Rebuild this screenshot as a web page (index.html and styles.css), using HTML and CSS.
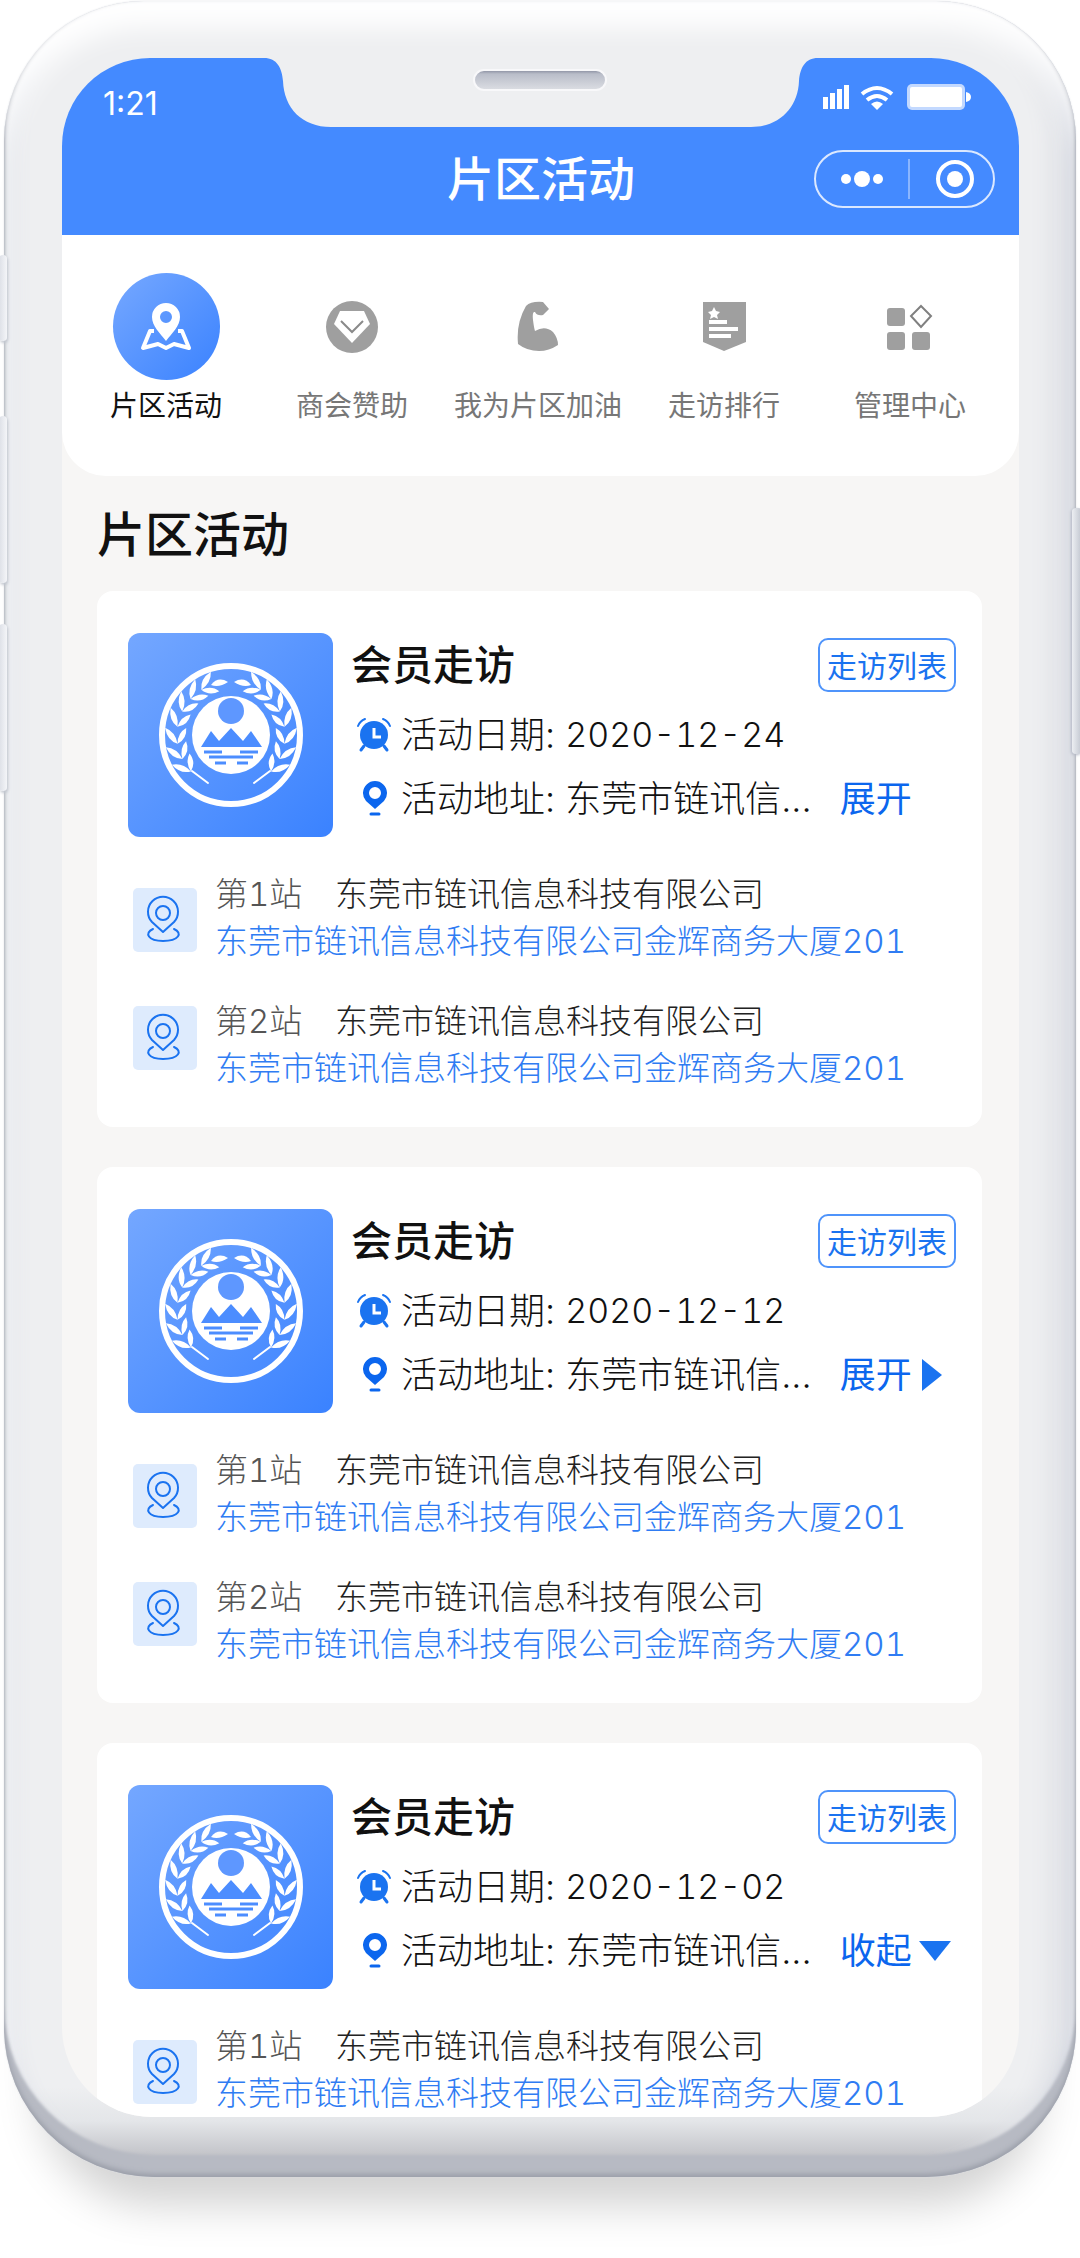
FILE: index.html
```html
<!DOCTYPE html>
<html lang="zh-CN">
<head>
    <meta charset="UTF-8">
    <meta name="viewport" content="width=device-width, initial-scale=1.0">
    <title>片区活动</title>
    <link rel="stylesheet" href="styles.css">
</head>
<body>
    <!-- shared icons -->
    <svg class="sprite" aria-hidden="true">
        <defs>
            <path id="leaf" d="M49 106 Q39 102 38 89 Q48 94 49 106 Q50 95 59 91 Q59 102 49 106Z"/>
            <g id="branch">
                <use href="#leaf" transform="rotate(-38 103 102)"/>
                <use href="#leaf" transform="rotate(-22 103 102)"/>
                <use href="#leaf" transform="rotate(-5 103 102)"/>
                <use href="#leaf" transform="rotate(13 103 102)"/>
                <use href="#leaf" transform="rotate(30 103 102)"/>
                <use href="#leaf" transform="rotate(46 103 102)"/>
                <use href="#leaf" transform="rotate(61 103 102)"/>
                <path d="M83 52 Q90 43 100 49 Q91 55 83 52Z"/>
                <path d="M64 138 L80 150" stroke="#fff" stroke-width="2" stroke-linecap="round"/>
            </g>
        </defs>
        <symbol id="emblem" viewBox="0 0 205 204">
            <circle cx="103" cy="102" r="69" fill="none" stroke="#fff" stroke-width="6"/>
            <circle cx="103" cy="102" r="39" fill="#fff"/>
            <g fill="#fff">
                <use href="#branch"/>
                <use href="#branch" transform="translate(206 0) scale(-1 1)"/>
            </g>
            <circle cx="103" cy="78" r="13" fill="#5e97ff"/>
            <path d="M73 114 L83 98 L91 108 L103 95 L115 108 L123 98 L134 114Z" fill="#4c8dff"/>
            <path d="M76 119h18M112 119h18M81 124h44M87 130h11M109 130h11" stroke="#4c8dff" stroke-width="3"/>
        </symbol>
        <symbol id="clock" viewBox="0 0 34 34">
            <circle cx="17" cy="17" r="14" fill="#1a73f0"/>
            <path d="M7 28l-3 4M27 28l3 4" stroke="#1a73f0" stroke-width="3" stroke-linecap="round"/>
            <path d="M1 8Q3 3 8 1M26 1Q31 3 33 8" fill="none" stroke="#1a73f0" stroke-width="2" stroke-linecap="round"/>
            <path d="M17 10v9h7" fill="none" stroke="#fff" stroke-width="3"/>
        </symbol>
        <symbol id="pin" viewBox="0 0 34 36">
            <path fill-rule="evenodd" d="M18 28L9 20A12 12 0 1 1 27 20ZM18 6a6 6 0 1 0 0 12a6 6 0 1 0 0-12Z" fill="#0b66ee"/>
            <path d="M14 33h8" stroke="#0b66ee" stroke-width="3" stroke-linecap="round"/>
        </symbol>
        <symbol id="place" viewBox="0 0 64 64">
            <g fill="none" stroke="#1a73f0" stroke-width="2">
                <path d="M30 44L19 34A15 15 0 1 1 41 34Z" stroke-linejoin="round"/>
                <circle cx="30" cy="25" r="7"/>
                <path d="M20 41C11 45 15 53 30 53C46 53 50 45 41 41" stroke-linecap="round"/>
            </g>
        </symbol>
    </svg>

    <div class="phone">
        <span class="key key-mute"></span>
        <span class="key key-up"></span>
        <span class="key key-down"></span>
        <span class="key key-power"></span>

        <div class="screen">
            <svg class="notch" width="554" height="69" viewBox="0 0 554 69" aria-hidden="true">
                <defs>
                    <linearGradient id="speaker" x1="0" y1="0" x2="0" y2="1">
                        <stop offset="0" stop-color="#858a9c"/>
                        <stop offset="0.2" stop-color="#b9bdc9"/>
                        <stop offset="1" stop-color="#dcdee3"/>
                    </linearGradient>
                </defs>
                <path d="M0 0C13 0 18 10 19 23C20 50 38 69 67 69H487C516 69 534 49 535 23C536 10 541 0 554 0Z" fill="#eeeff1"/>
                <rect x="210" y="12" width="132" height="20" rx="10" fill="url(#speaker)" stroke="#f8f8fa" stroke-width="2"/>
            </svg>

            <header class="header">
                <div class="status">
                    <span class="time">1:21</span>
                    <svg class="signals" width="149" height="28" viewBox="0 0 149 28" aria-hidden="true">
                        <g fill="#fff">
                            <path d="M0 14h5v12H0zM7 10h5v16H7zM14 6h5v20h-5zM21 2h5v24h-5z"/>
                            <path d="M54 27l-6-6q6-5 12 0z"/>
                            <path d="M143 9q5 1 5 5t-5 5z"/>
                            <rect x="84" y="1" width="58" height="26" rx="5" fill="#c3d9ff"/>
                            <rect x="87" y="4" width="52" height="20" rx="2"/>
                        </g>
                        <path d="M39 11q15-12 30 0M44 17q10-8 20 0" fill="none" stroke="#fff" stroke-width="4"/>
                    </svg>
                </div>
                <div class="titlebar">
                    <h1>片区活动</h1>
                    <div class="capsule">
                        <button type="button" aria-label="更多">
                            <svg width="42" height="16" viewBox="0 0 42 16"><g fill="#fff"><circle cx="5" cy="8" r="5"/><circle cx="21" cy="8" r="8"/><circle cx="37" cy="8" r="5"/></g></svg>
                        </button>
                        <button type="button" aria-label="关闭">
                            <svg width="40" height="40" viewBox="0 0 40 40"><circle cx="20" cy="20" r="17" fill="none" stroke="#fff" stroke-width="4"/><circle cx="20" cy="20" r="8" fill="#fff"/></svg>
                        </button>
                    </div>
                </div>
            </header>

            <nav class="nav">
                <a href="#" class="nav-item active">
                    <span class="nav-icon">
                        <svg width="52" height="50" viewBox="0 0 52 50">
                            <path d="M14 29H10L3 46L18 42L26 46L34 42L49 46L42 29H38" fill="none" stroke="#fff" stroke-width="4" stroke-linejoin="round"/>
                            <path fill-rule="evenodd" d="M26 39C20 31 12 24 12 15A14 14 0 0 1 40 15C40 24 32 31 26 39ZM26 9a6 6 0 1 0 0 12a6 6 0 1 0 0-12Z" fill="#fff"/>
                        </svg>
                    </span>
                    片区活动
                </a>
                <a href="#" class="nav-item">
                    <span class="nav-icon">
                        <svg width="52" height="52" viewBox="0 0 52 52">
                            <circle cx="26" cy="26" r="26" fill="#9f9f9f"/>
                            <path d="M14 10H38L44 23L26 42L8 23Z" fill="#fff"/>
                            <path d="M15 20L26 31L37 20" fill="none" stroke="#8a8a8a" stroke-width="2"/>
                        </svg>
                    </span>
                    商会赞助
                </a>
                <a href="#" class="nav-item">
                    <span class="nav-icon">
                        <svg width="42" height="51" viewBox="0 0 42 51">
                            <path d="M9 5Q14 0 26 1L32 8L26 14Q20 15 18 11Q15 10 16 19Q17 27 18 30Q28 24 36 31Q41 37 41 44Q32 50 22 50Q10 50 1 43Q-1 22 9 5Z" fill="#9f9f9f"/>
                        </svg>
                    </span>
                    我为片区加油
                </a>
                <a href="#" class="nav-item">
                    <span class="nav-icon">
                        <svg width="43" height="49" viewBox="0 0 43 49">
                            <path d="M0 0H43V40L21 49L0 40Z" fill="#9f9f9f"/>
                            <path d="M11 5L13 9L17 10L14 13L15 17L11 15L7 17L8 13L5 10L9 9Z" fill="#fff"/>
                            <path d="M6 20h18M6 27h29M6 34h22" stroke="#fff" stroke-width="4"/>
                        </svg>
                    </span>
                    走访排行
                </a>
                <a href="#" class="nav-item">
                    <span class="nav-icon">
                        <svg width="46" height="46" viewBox="0 0 46 46">
                            <g fill="#9f9f9f"><rect y="4" width="18" height="18" rx="3"/><rect y="28" width="18" height="18" rx="3"/><rect x="25" y="28" width="18" height="18" rx="3"/></g>
                            <path d="M34 2L44 12L34 23L24 12Z" fill="none" stroke="#808080" stroke-width="2"/>
                        </svg>
                    </span>
                    管理中心
                </a>
            </nav>

            <main class="content">
                <h2>片区活动</h2>

                <article class="card">
                    <div class="card-head">
                        <div class="logo"><svg><use href="#emblem"/></svg></div>
                        <div class="info">
                            <div class="card-title">
                                <h3>会员走访</h3>
                                <button type="button" class="list-btn">走访列表</button>
                            </div>
                            <p class="row"><svg><use href="#clock"/></svg><span>活动日期:</span><time>2020-12-24</time></p>
                            <p class="row"><svg><use href="#pin"/></svg><span>活动地址:</span><span>东莞市链讯信...</span><button type="button" class="toggle">展开</button></p>
                        </div>
                    </div>
                    <ul class="stops">
                        <li class="stop">
                            <svg class="stop-icon"><use href="#place"/></svg>
                            <div>
                                <p class="company"><span class="no">第1站</span>东莞市链讯信息科技有限公司</p>
                                <a href="#" class="address">东莞市链讯信息科技有限公司金辉商务大厦201</a>
                            </div>
                        </li>
                        <li class="stop">
                            <svg class="stop-icon"><use href="#place"/></svg>
                            <div>
                                <p class="company"><span class="no">第2站</span>东莞市链讯信息科技有限公司</p>
                                <a href="#" class="address">东莞市链讯信息科技有限公司金辉商务大厦201</a>
                            </div>
                        </li>
                    </ul>
                </article>

                <article class="card">
                    <div class="card-head">
                        <div class="logo"><svg><use href="#emblem"/></svg></div>
                        <div class="info">
                            <div class="card-title">
                                <h3>会员走访</h3>
                                <button type="button" class="list-btn">走访列表</button>
                            </div>
                            <p class="row"><svg><use href="#clock"/></svg><span>活动日期:</span><time>2020-12-12</time></p>
                            <p class="row"><svg><use href="#pin"/></svg><span>活动地址:</span><span>东莞市链讯信...</span><button type="button" class="toggle closed">展开</button></p>
                        </div>
                    </div>
                    <ul class="stops">
                        <li class="stop">
                            <svg class="stop-icon"><use href="#place"/></svg>
                            <div>
                                <p class="company"><span class="no">第1站</span>东莞市链讯信息科技有限公司</p>
                                <a href="#" class="address">东莞市链讯信息科技有限公司金辉商务大厦201</a>
                            </div>
                        </li>
                        <li class="stop">
                            <svg class="stop-icon"><use href="#place"/></svg>
                            <div>
                                <p class="company"><span class="no">第2站</span>东莞市链讯信息科技有限公司</p>
                                <a href="#" class="address">东莞市链讯信息科技有限公司金辉商务大厦201</a>
                            </div>
                        </li>
                    </ul>
                </article>

                <article class="card last">
                    <div class="card-head">
                        <div class="logo"><svg><use href="#emblem"/></svg></div>
                        <div class="info">
                            <div class="card-title">
                                <h3>会员走访</h3>
                                <button type="button" class="list-btn">走访列表</button>
                            </div>
                            <p class="row"><svg><use href="#clock"/></svg><span>活动日期:</span><time>2020-12-02</time></p>
                            <p class="row"><svg><use href="#pin"/></svg><span>活动地址:</span><span>东莞市链讯信...</span><button type="button" class="toggle open">收起</button></p>
                        </div>
                    </div>
                    <ul class="stops">
                        <li class="stop">
                            <svg class="stop-icon"><use href="#place"/></svg>
                            <div>
                                <p class="company"><span class="no">第1站</span>东莞市链讯信息科技有限公司</p>
                                <a href="#" class="address">东莞市链讯信息科技有限公司金辉商务大厦201</a>
                            </div>
                        </li>
                    </ul>
                </article>
            </main>
        </div>
    </div>
</body>
</html>
```

FILE: styles.css
```css
* {
    box-sizing: border-box;
}

body {
    margin: 0;
    padding: 1px 4px 82px;
    background: #fff;
    color: #111;
    font-family: Inter, "Noto Sans CJK SC", sans-serif;
    overflow-x: hidden;
}

h1, h2, h3, p, ul {
    margin: 0;
    padding: 0;
}

ul {
    list-style: none;
}

a {
    text-decoration: none;
}

button {
    padding: 0;
    border: none;
    background: none;
    font-family: inherit;
}

.sprite {
    position: absolute;
    width: 0;
    height: 0;
}

/* phone body */
.phone {
    position: relative;
    padding: 57px 57px 60px 58px;
    border-radius: 140px 140px 150px 150px;
    background: linear-gradient(#eeeff1 calc(100% - 90px), #e4e6e9 calc(100% - 56px), #c3c4c9 calc(100% - 22px));
    box-shadow:
        inset 0 -3px 5px #9b9fa9,
        inset 0 -22px 3px #b7bac3,
        inset 0 26px 26px #fff,
        inset -10px 0 10px #c9cdd8,
        inset -26px 0 20px #e0e2e7,
        inset 10px 0 18px #dfe2e9,
        0 0 2px #dfe1e5,
        0 64px 44px -36px rgba(0, 0, 0, 0.18);
}

.key {
    position: absolute;
    left: -5px;
    width: 8px;
    border-radius: 4px;
    background: linear-gradient(90deg, #dcdfe6, #f4f5f8);
    box-shadow: 1px 2px 3px #c3c7d0;
}

.key-mute {
    top: 254px;
    height: 86px;
}

.key-up {
    top: 415px;
    height: 167px;
}

.key-down {
    top: 623px;
    height: 167px;
}

.key-power {
    left: auto;
    right: -6px;
    top: 507px;
    height: 246px;
    width: 10px;
    background: linear-gradient(90deg, #eceef2, #bfc4ce);
    box-shadow: -1px 1px 3px #b4b9c6;
}

.screen {
    position: relative;
    overflow: hidden;
    border-radius: 88px 88px 90px 90px;
    background: #f7f6f5;
}

.notch {
    position: absolute;
    top: 0;
    left: 50%;
    transform: translateX(-50%);
}

/* header */
.header {
    padding: 22px 24px 27px 25px;
    background: #448aff;
    color: #fff;
}

.status {
    display: flex;
    justify-content: space-between;
    align-items: center;
    height: 46px;
    padding: 0 23px 0 16px;
    margin-bottom: 23px;
}

.time {
    font-size: 32px;
}

.signals {
    margin-bottom: 12px;
}

.titlebar {
    display: grid;
    grid-template-columns: 1fr auto 1fr;
    align-items: center;
}

h1 {
    grid-column: 2;
    font-size: 47px;
    line-height: 59px;
    font-weight: 500;
}

.capsule {
    justify-self: end;
    display: flex;
    align-items: center;
    width: 181px;
    height: 58px;
    border: 2px solid #dbe8ff;
    border-radius: 29px;
}

.capsule button {
    flex: 1;
    display: flex;
    justify-content: center;
    align-items: center;
    height: 40px;
    padding-left: 6px;
}

.capsule button:first-child {
    flex: none;
    width: 94px;
    padding-left: 0;
    border-right: 2px solid #8ab5ff;
}

/* nav */
.nav {
    display: flex;
    padding: 38px 16px 53px 11px;
    border-radius: 0 0 44px 44px;
    background: #fff;
}

.nav-item {
    flex: 1 1 0;
    display: flex;
    flex-direction: column;
    align-items: center;
    gap: 9px;
    color: #777;
    font-size: 28px;
    line-height: 34px;
    white-space: nowrap;
}

.nav-item.active {
    color: #111;
}

.nav-icon {
    display: flex;
    justify-content: center;
    align-items: center;
    width: 107px;
    height: 107px;
    border-radius: 50%;
}

.active .nav-icon {
    background: linear-gradient(135deg, #76a8ff, #3a82ff);
}

/* list */
.content {
    padding: 30px 37px 0 35px;
}

h2 {
    margin-bottom: 28px;
    font-size: 48px;
    line-height: 57px;
    font-weight: 500;
}

.card {
    padding: 42px 26px 35px 31px;
    margin-bottom: 40px;
    border-radius: 16px;
    background: #fff;
}

.card.last {
    padding-bottom: 0;
    margin-bottom: 0;
    border-radius: 16px 16px 0 0;
}

.card-head {
    display: flex;
    gap: 18px;
}

.logo {
    flex: none;
    width: 205px;
    height: 204px;
    border-radius: 12px;
    background: linear-gradient(135deg, #74a7ff, #3a82ff);
}

.logo svg {
    display: block;
    width: 100%;
    height: 100%;
}

.info {
    flex: 1;
    padding-top: 5px;
}

.card-title {
    display: flex;
    justify-content: space-between;
    align-items: center;
    margin-bottom: 11px;
}

h3 {
    font-size: 41px;
    line-height: 54px;
    font-weight: 500;
}

.list-btn {
    width: 138px;
    height: 54px;
    padding-bottom: 3px;
    border: 2px solid #4f94fb;
    border-radius: 10px;
    color: #1a73f0;
    font-size: 30px;
    white-space: nowrap;
}

.row {
    display: flex;
    align-items: center;
    gap: 10px;
    padding-left: 6px;
    font-size: 36px;
    line-height: 64px;
    font-weight: 300;
    white-space: nowrap;
}

.row svg {
    width: 34px;
    height: 36px;
}

time {
    font-size: 34px;
    font-variant-numeric: tabular-nums;
}

.toggle {
    display: flex;
    align-items: center;
    gap: 10px;
    margin-left: 18px;
    color: #0b66ee;
    font-size: 36px;
    line-height: 64px;
}

.toggle.closed::after {
    content: "";
    border: solid transparent;
    border-width: 16px 0 16px 20px;
    border-left-color: #1a73f0;
}

.toggle.open {
    gap: 7px;
}

.toggle.open::after {
    content: "";
    border: solid transparent;
    border-width: 20px 16px 0;
    border-top-color: #1a73f0;
}

.stops {
    display: flex;
    flex-direction: column;
    gap: 33px;
    margin-top: 34px;
    padding-left: 5px;
}

.stop {
    display: flex;
    gap: 18px;
    font-size: 33px;
    line-height: 47px;
    font-weight: 300;
    font-variant-numeric: tabular-nums;
    white-space: nowrap;
}

.stop-icon {
    flex: none;
    width: 64px;
    height: 64px;
    margin-top: 17px;
    border-radius: 5px;
    background: #deebfd;
}

.stop + .stop .stop-icon {
    margin-top: 8px;
}

.company {
    display: flex;
    color: #222;
}

.no {
    width: 120px;
    color: #555;
}

.address {
    display: block;
    color: #2f7cf3;
}
```
